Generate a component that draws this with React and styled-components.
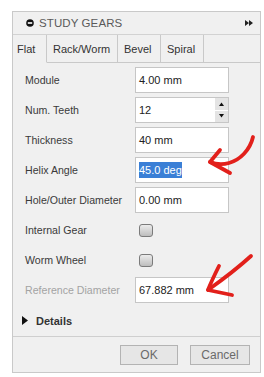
import React from 'react';
import styled, {createGlobalStyle} from 'styled-components';

const GlobalStyle = createGlobalStyle`
    body {
        margin: 0;
        background: #ffffff;
        font-family: "Liberation Sans", Arial, sans-serif;
    }
`;

const Page = styled.div`
    position: relative;
    width: 264px;
    height: 377px;
    padding: 11px 0 0 12px;
    box-sizing: border-box;
`;

const Dialog = styled.div`
    width: 249px;
    height: 362px;
    box-sizing: border-box;
    border: 1px solid #c9c9c9;
    background: #f0f0f0;
    display: flex;
    flex-direction: column;
`;

const TitleBar = styled.div`
    height: 22px;
    border-bottom: 1px solid #d2d2d2;
    display: flex;
    align-items: center;
    padding: 0 7px 0 13px;
    gap: 5px;
    font-size: 11.5px;
    color: #5a5a5a;
`;

const Title = styled.span`
    flex: 1;
    letter-spacing: 0.1px;
`;

const TabRow = styled.div`
    display: flex;
    height: 28px;
`;

const Tab = styled.div`
    box-sizing: border-box;
    width: ${p => p.$w}px;
    border-right: 1px solid #c9c9c9;
    border-bottom: 1px solid ${p => p.$active ? 'transparent' : '#c9c9c9'};
    display: flex;
    align-items: center;
    padding-left: ${p => p.$active ? 4 : 6}px;
    font-size: 11px;
    color: #333;
`;

const TabFill = styled.div`
    flex: 1;
    border-bottom: 1px solid #c9c9c9;
`;

const Content = styled.div`
    padding: 2px 0 0 12px;
    display: flex;
    flex-direction: column;
`;

const Row = styled.div`
    height: 30px;
    display: flex;
    align-items: center;
`;

const Label = styled.div`
    width: 110px;
    font-size: 10.6px;
    color: ${p => p.$muted ? '#a3a3a3' : '#3a3a3a'};
`;

const Field = styled.div`
    position: relative;
    box-sizing: border-box;
    width: 94px;
    height: 26px;
    background: #ffffff;
    border: 1px solid #c6c6c6;
    display: flex;
    align-items: center;
    padding-left: 3px;
    font-size: 11px;
    color: #222;
`;

const Selected = styled.span`
    background: #3a7fd6;
    color: #ffffff;
    padding: 2px 0;
`;

const Spinner = styled.div`
    position: absolute;
    right: 0;
    top: 0;
    bottom: 0;
    width: 13px;
    display: flex;
    flex-direction: column;
    gap: 1px;
`;

const SpinButton = styled.div`
    flex: 1;
    background: #e4e4e4;
    display: flex;
    align-items: center;
    justify-content: center;
`;

const Checkbox = styled.div`
    box-sizing: border-box;
    width: 14px;
    height: 13px;
    margin-left: 4px;
    border: 1px solid #7b7b7b;
    border-radius: 3px;
    background: linear-gradient(#ececec, #bdbdbd);
`;

const DetailsRow = styled.div`
    height: 31px;
    display: flex;
    align-items: center;
    gap: 8px;
    padding-left: 9px;
    font-size: 11px;
    font-weight: bold;
    color: #333;
`;

const Footer = styled.div`
    margin-top: auto;
    height: 35px;
    border-top: 1px solid #cfcfcf;
    display: flex;
    align-items: center;
    justify-content: flex-end;
    gap: 12px;
    padding-right: 10px;
`;

const Button = styled.div`
    box-sizing: border-box;
    width: ${p => p.$w}px;
    height: 20px;
    border: 1px solid #b3b3b3;
    background: #e6e6e6;
    display: flex;
    align-items: center;
    justify-content: center;
    font-size: 12px;
    color: #6a6a6a;
`;

const Annotations = styled.svg`
    position: absolute;
    left: 0;
    top: 0;
    pointer-events: none;
`;

const tabs = [
    {name: 'Flat', w: 34},
    {name: 'Rack/Worm', w: 71},
    {name: 'Bevel', w: 43},
    {name: 'Spiral', w: 43},
];

function Arrow({up}) {
    return (
        <svg width="7" height="4" viewBox="0 0 7 4">
            <path d={up ? 'M1 4 L3.5 0.5 L6 4 Z' : 'M1 0 L3.5 3.5 L6 0 Z'} fill="#111" />
        </svg>
    );
}

export default function App() {
    return (
        <Page>
            <GlobalStyle />
            <Dialog>
                <TitleBar>
                    <svg width="8" height="8" viewBox="0 0 8 8">
                        <circle cx="4" cy="4" r="3.8" fill="#111" />
                        <rect x="1.8" y="3.2" width="4.4" height="1.6" fill="#fff" />
                    </svg>
                    <Title>STUDY GEARS</Title>
                    <svg width="8" height="6" viewBox="0 0 8 6">
                        <path d="M0 0 L4 3 L0 6 Z M4 0 L8 3 L4 6 Z" fill="#222" />
                    </svg>
                </TitleBar>
                <TabRow>
                    {tabs.map((t, i) => (
                        <Tab key={t.name} $w={t.w} $active={i === 0}>{t.name}</Tab>
                    ))}
                    <TabFill />
                </TabRow>
                <Content>
                    <Row>
                        <Label>Module</Label>
                        <Field>4.00 mm</Field>
                    </Row>
                    <Row>
                        <Label>Num. Teeth</Label>
                        <Field>
                            12
                            <Spinner>
                                <SpinButton><Arrow up /></SpinButton>
                                <SpinButton><Arrow /></SpinButton>
                            </Spinner>
                        </Field>
                    </Row>
                    <Row>
                        <Label>Thickness</Label>
                        <Field>40 mm</Field>
                    </Row>
                    <Row>
                        <Label>Helix Angle</Label>
                        <Field><Selected>45.0 deg</Selected></Field>
                    </Row>
                    <Row>
                        <Label>Hole/Outer Diameter</Label>
                        <Field>0.00 mm</Field>
                    </Row>
                    <Row>
                        <Label>Internal Gear</Label>
                        <Checkbox />
                    </Row>
                    <Row>
                        <Label>Worm Wheel</Label>
                        <Checkbox />
                    </Row>
                    <Row>
                        <Label $muted>Reference Diameter</Label>
                        <Field>67.882 mm</Field>
                    </Row>
                </Content>
                <DetailsRow>
                    <svg width="6" height="9" viewBox="0 0 6 9">
                        <path d="M0 0 L6 4.5 L0 9 Z" fill="#111" />
                    </svg>
                    Details
                </DetailsRow>
                <Footer>
                    <Button $w={58}>OK</Button>
                    <Button $w={60}>Cancel</Button>
                </Footer>
            </Dialog>
            {/* hand-drawn red arrows */}
            <Annotations width="264" height="377">
                <g fill="none" stroke="#e2201b" strokeWidth="3.8" strokeLinecap="round" strokeLinejoin="round">
                    <path d="M253 137 C250 150 240 160 229 163 C222 165 215 164 210 162" />
                    <path d="M220 150 L210 162 L230 173" />
                    <path d="M251 256 C240 266 222 280 208 290" />
                    <path d="M219 266 C215 274 211 282 208 290 L232 295" />
                </g>
            </Annotations>
        </Page>
    );
}
